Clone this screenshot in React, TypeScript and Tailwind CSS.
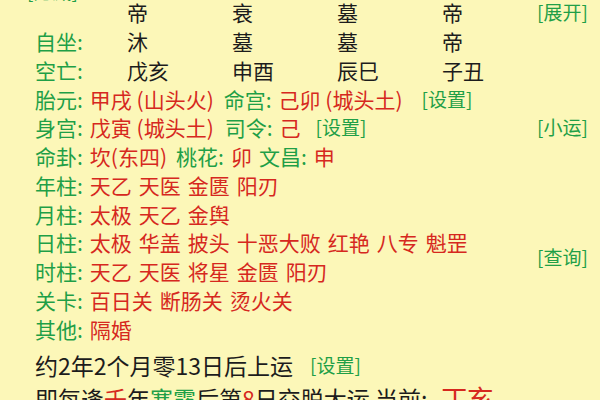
import React from 'react'

const GREEN = 'text-[#1f9f47]'
const RED = 'text-[#d6281e]'

// 十二长生 / 空亡 表格的三行
const TABLE_ROWS: { label: string; cells: string[] }[] = [
  { label: '', cells: ['帝', '衰', '墓', '帝'] },
  { label: '自坐:', cells: ['沐', '墓', '墓', '帝'] },
  { label: '空亡:', cells: ['戊亥', '申酉', '辰巳', '子丑'] },
]

const SHENSHA: { label: string; items: string[] }[] = [
  { label: '年柱:', items: ['天乙', '天医', '金匮', '阳刃'] },
  { label: '月柱:', items: ['太极', '天乙', '金舆'] },
  { label: '日柱:', items: ['太极', '华盖', '披头', '十恶大败', '红艳', '八专', '魁罡'] },
  { label: '时柱:', items: ['天乙', '天医', '将星', '金匮', '阳刃'] },
  { label: '关卡:', items: ['百日关', '断肠关', '烫火关'] },
  { label: '其他:', items: ['隔婚'] },
]

function Btn({ children, className = '' }: { children: React.ReactNode; className?: string }) {
  return <span className={`text-[19px] ${GREEN} ${className}`}>[{children}]</span>
}

function Row({ children }: { children: React.ReactNode }) {
  return <div className="flex items-center gap-x-[7px] h-[28.8px] whitespace-nowrap">{children}</div>
}

export default function App() {
  return (
    <div
      className="w-[600px] h-[400px] overflow-hidden bg-[#fcf7b8] flex text-[21px] leading-[28.8px] text-[#1c1c1c]"
      style={{ fontFamily: '"Noto Sans CJK SC", "Noto Sans", sans-serif' }}
    >
      {/* ── 主体 ───────────────────── */}
      <div className="flex-1 min-w-0 pl-[35px] -mt-[1.9px]">
        {TABLE_ROWS.map((row, i) => (
          <div key={i} className="grid grid-cols-[92px_105px_105px_105px_105px] h-[28.8px] whitespace-nowrap">
            <div className={GREEN}>
              {i === 0 ? <Btn className="relative -top-[22px] -ml-[8px]">隐藏</Btn> : row.label}
            </div>
            {row.cells.map((c, j) => (
              <div key={j}>{c}</div>
            ))}
          </div>
        ))}

        <Row>
          <span className={GREEN}>胎元:</span>
          <span className={RED}>甲戌 (山头火)</span>
          <span className={`${GREEN} ml-[3px]`}>命宫:</span>
          <span className={RED}>己卯 (城头土)</span>
          <Btn className="ml-[12px]">设置</Btn>
        </Row>
        <Row>
          <span className={GREEN}>身宫:</span>
          <span className={RED}>戊寅 (城头土)</span>
          <span className={`${GREEN} ml-[4px]`}>司令:</span>
          <span className={RED}>己</span>
          <Btn className="ml-[8px]">设置</Btn>
        </Row>
        <Row>
          <span className={GREEN}>命卦:</span>
          <span className={RED}>坎(东四)</span>
          <span className={`${GREEN} ml-[2px]`}>桃花:</span>
          <span className={RED}>卯</span>
          <span className={GREEN}>文昌:</span>
          <span className={RED}>申</span>
        </Row>

        {SHENSHA.map((row) => (
          <Row key={row.label}>
            <span className={GREEN}>{row.label}</span>
            {row.items.map((it) => (
              <span key={it} className={RED}>{it}</span>
            ))}
          </Row>
        ))}

        <div className="flex items-center mt-[5.6px] h-[32px] text-[23px] whitespace-nowrap">
          <span>约2年2个月零13日后上运</span>
          <Btn className="ml-[17px]">设置</Btn>
        </div>
        <div className="flex items-center mt-[1px] h-[32px] text-[23px] whitespace-nowrap">
          <span>
            即每逢<span className={RED}>壬</span>年<span className={GREEN}>寒露</span>后第
            <span className={RED}>8</span>日交脱大运 当前:
          </span>
          <span className={`${RED} text-[26px] ml-[14px]`}>丁亥</span>
        </div>
      </div>

      {/* ── 右侧操作 ───────────────── */}
      <div className="w-[63px] flex flex-col -mt-[1.9px] shrink-0">
        <div className="h-[28.8px] flex items-center"><Btn>展开</Btn></div>
        <div className="h-[28.8px] flex items-center mt-[86.4px]"><Btn>小运</Btn></div>
        <div className="h-[28.8px] flex items-center mt-[100.5px]"><Btn>查询</Btn></div>
      </div>
    </div>
  )
}
